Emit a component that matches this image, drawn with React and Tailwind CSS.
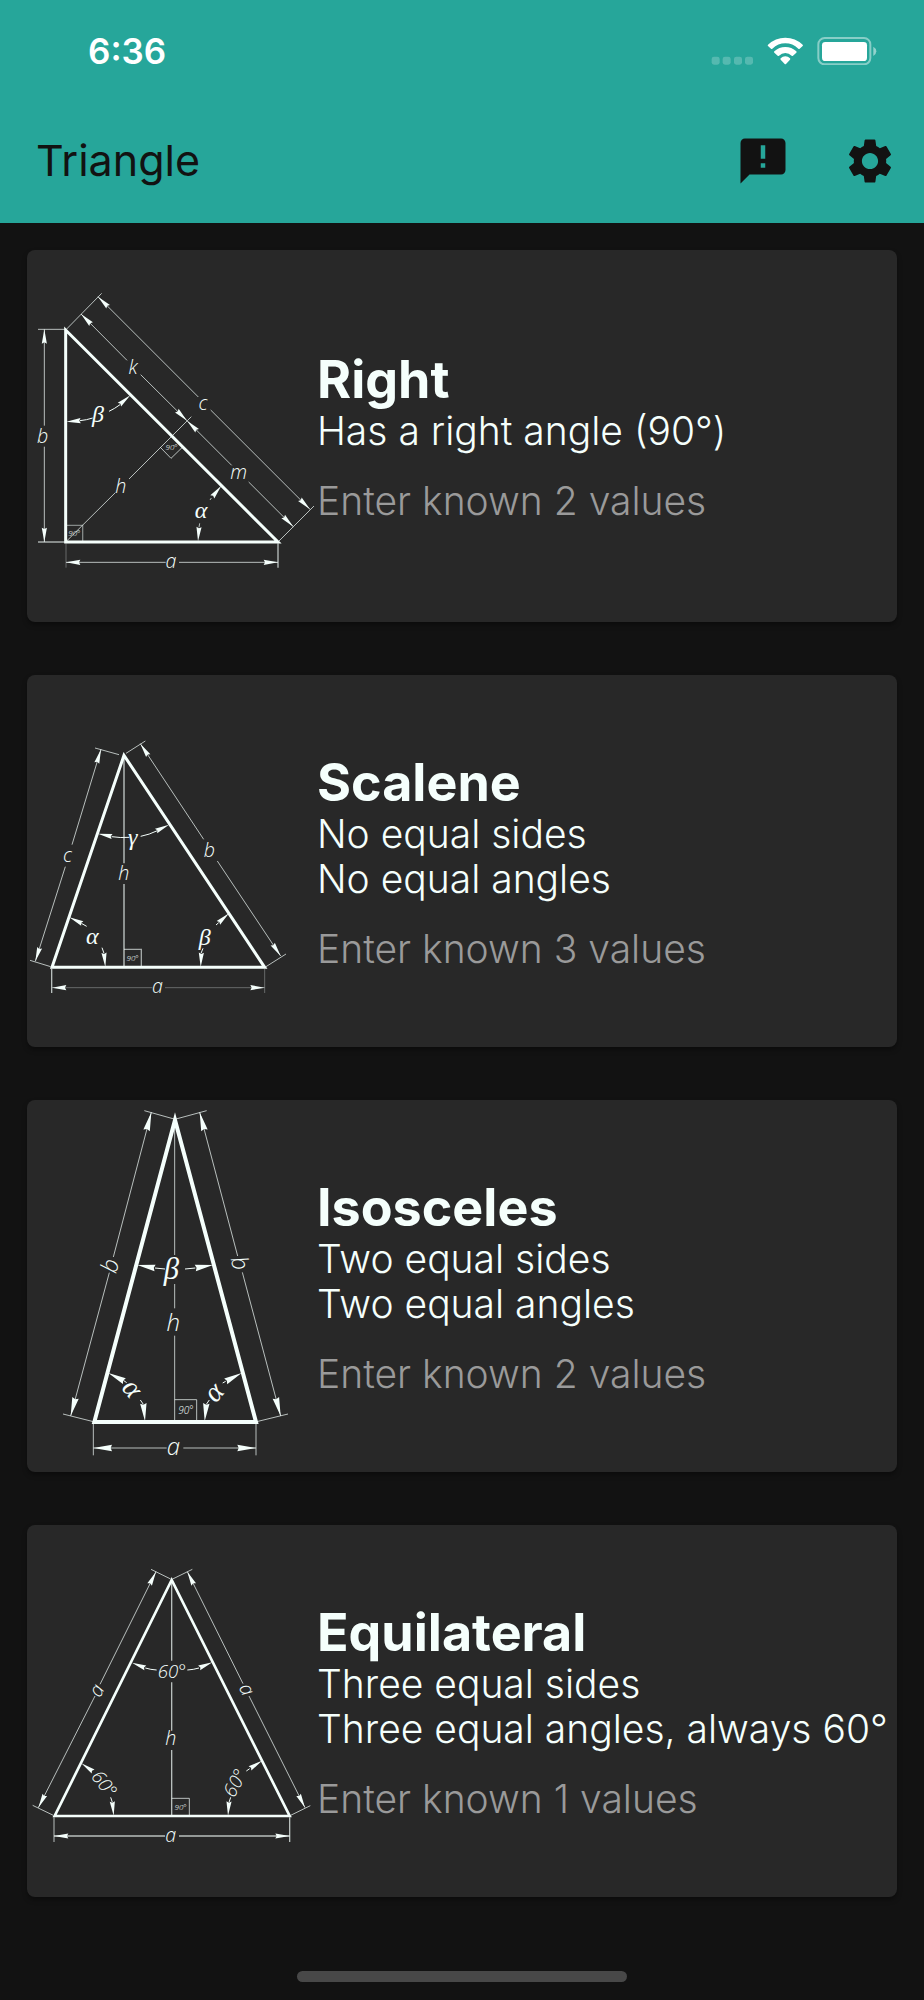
import React from "react";
import { MdAnnouncement, MdSettings } from "react-icons/md";

const INK = "#f5fffc";

function Line({ p, w = 3, o = 0.7 }) {
  return <polyline points={p} fill="none" stroke={INK} strokeWidth={w} strokeOpacity={o} />;
}

/* Arrowhead whose point is at (x, y), coming from the direction of (fx, fy). */
function Arrow({ x, y, fx, fy, len = 43 }) {
  const a = (Math.atan2(y - fy, x - fx) * 180) / Math.PI;
  const h = len / 5.6;
  return (
    <polygon
      points={`0,0 ${-len},${-h} ${-len + 4},0 ${-len},${h}`}
      fill={INK}
      transform={`translate(${x} ${y}) rotate(${a})`}
    />
  );
}

/* Dimension line in two halves, with a break for its label. */
function Dim({ a, b, c, d, len, o, w }) {
  return (
    <g>
      <Line p={`${a} ${b}`} o={o} w={w} />
      <Line p={`${c} ${d}`} o={o} w={w} />
      <Arrow x={a[0]} y={a[1]} fx={b[0]} fy={b[1]} len={len} />
      <Arrow x={d[0]} y={d[1]} fx={c[0]} fy={c[1]} len={len} />
    </g>
  );
}

function Label({ x, y, size = 59, r = 0, low = false, greek = false, children }) {
  const dy = size * (low ? (greek ? 0.22 : 0.27) : greek ? 0.24 : 0.37);
  return (
    <text
      transform={`translate(${x} ${y}) rotate(${r})`}
      y={dy}
      textAnchor="middle"
      fontSize={size}
      fill={INK}
      className={
        greek
          ? "font-['Liberation_Serif',serif] italic"
          : "font-['Open_Sans',sans-serif] font-[350] italic"
      }
    >
      {children}
    </text>
  );
}

function Figure({ viewBox, label, children }) {
  return (
    <svg viewBox={viewBox} role="img" aria-label={label} className="block w-full">
      {children}
    </svg>
  );
}

function RightFigure() {
  return (
    <Figure viewBox="21 -60 870 1116" label="Right triangle">
      <Line p="54,178 137,178" />
      <Line p="54,816 137,816" w={4} />
      <Line p="138,820 138,893" o={0.3} />
      <Line p="774,820 774,893" w={4} />
      <Line p="137,180 245,70" />
      <Line p="774,816 882,708" />
      <Dim a={[73, 178]} b={[73, 467]} c={[73, 530]} d={[73, 816]} />
      <Dim a={[138, 877]} b={[437, 877]} c={[477, 877]} d={[774, 877]} w={3} />
      <Dim a={[234, 80]} b={[535, 381]} c={[572, 420]} d={[870, 718]} />
      <Dim a={[183, 132]} b={[321, 271]} c={[362, 314]} d={[501, 452]} />
      <Dim a={[501, 452]} b={[635, 586]} c={[686, 636]} d={[820, 770]} />
      <Line p="137,816 286,668" />
      <Line p="327,627 514,440" />
      <Line p="421,532 453,565 487,532" />
      <Line p="137,766 188,766 188,816" w={4} o={0.45} />
      <path d="M180 452 Q200 450 218 444 M267 424 Q284 416 300 404" fill="none" stroke={INK} strokeWidth="3" />
      <Arrow x={139} y={455} fx={182} fy={452} />
      <Arrow x={331} y={376} fx={298} fy={404} />
      <Arrow x={604} y={647} fx={574} fy={684} />
      <Line p="574,684 570,690" />
      <Arrow x={534} y={814} fx={537} fy={772} />
      <Line p="537,772 539,760" />
      <polygon points="137,180 137,816 774,816" fill="none" stroke={INK} strokeWidth="9" />
      <Label x={68} y={496}>b</Label>
      <Label x={339} y={290}>k</Label>
      <Label x={549} y={404} low>c</Label>
      <Label x={656} y={612} low>m</Label>
      <Label x={302} y={648}>h</Label>
      <Label x={453} y={878} low>a</Label>
      <Label x={234} y={440} size={72} greek>β</Label>
      <Label x={543} y={729} size={72} low greek>α</Label>
      <Label x={163} y={790} size={24}>90°</Label>
      <Label x={455} y={531} size={24}>90°</Label>
    </Figure>
  );
}

function ScaleneFigure() {
  return (
    <Figure viewBox="21 -135 870 1116" label="Scalene triangle">
      <Line p="225,84 297,104" />
      <Line p="30,721 92,740" />
      <Line p="318,100 376,63" />
      <Line p="738,740 798,702" />
      <Line p="95,746 95,819" w={4} />
      <Line p="734,746 734,819" o={0.3} />
      <Line p="312,106 312,430" w={5} o={0.6} />
      <Line p="312,492 312,742" w={5} o={0.6} />
      <Line p="312,688 364,688 364,742" w={4} o={0.6} />
      <Dim a={[243, 88]} b={[156, 374]} c={[136, 440]} d={[46, 724]} />
      <Dim a={[361, 71]} b={[551, 358]} c={[592, 423]} d={[782, 708]} />
      <Dim a={[96, 803]} b={[397, 803]} c={[435, 803]} d={[734, 803]} o={0.3} />
      <path
        d="M275 350 Q300 354 328 352 M362 349 Q388 344 412 332 M184 610 L200 619 M252 700 L246 683 M543 700 L549 685 M596 608 L588 615"
        fill="none"
        stroke={INK}
        strokeWidth="3"
      />
      <Arrow x={234} y={341} fx={275} fy={349} />
      <Arrow x={447} y={314} fx={410} fy={332} />
      <Arrow x={148} y={592} fx={186} fy={610} />
      <Arrow x={256} y={741} fx={252} fy={698} />
      <Arrow x={542} y={741} fx={544} fy={700} />
      <Arrow x={627} y={580} fx={594} fy={610} />
      <polygon points="312,106 96,742 734,742" fill="none" stroke={INK} strokeWidth="9" />
      <Label x={142} y={410} low>c</Label>
      <Label x={568} y={388}>b</Label>
      <Label x={311} y={458}>h</Label>
      <Label x={412} y={804} low>a</Label>
      <Label x={338} y={359} size={72} low greek>γ</Label>
      <Label x={217} y={656} size={72} low greek>α</Label>
      <Label x={554} y={657} size={72} greek>β</Label>
      <Label x={338} y={715} size={24}>90°</Label>
    </Figure>
  );
}

function IsoscelesFigure() {
  return (
    <Figure viewBox="-69 15 870 1116" label="Isosceles triangle">
      <Line p="283,47 372,72" />
      <Line p="39,957 130,980" />
      <Line p="378,72 470,47" />
      <Line p="620,980 714,957" />
      <Line p="130,985 130,1081" />
      <Line p="618,985 618,1081" />
      <Line p="374,75 374,480" />
      <Line p="374,567 374,640" />
      <Line p="374,722 374,981" />
      <Line p="374,914 440,914 440,981" w={3} />
      <Dim a={[304, 52]} b={[190, 486]} c={[178, 533]} d={[62, 963]} len={56} />
      <Dim a={[449, 52]} b={[563, 483]} c={[577, 532]} d={[692, 963]} len={56} />
      <Dim a={[130, 1059]} b={[350, 1059]} c={[400, 1059]} d={[618, 1059]} len={56} />
      <path
        d="M315 519 L345 522 M436 519 L405 522 M220 856 L230 863 M280 928 L271 915 M527 859 L518 864 M469 928 L478 915"
        fill="none"
        stroke={INK}
        strokeWidth="3"
      />
      <Arrow x={262} y={510} fx={315} fy={519} len={54} />
      <Arrow x={489} y={510} fx={436} fy={519} len={54} />
      <Arrow x={175} y={834} fx={222} fy={858} len={54} />
      <Arrow x={285} y={979} fx={280} fy={925} len={54} />
      <Arrow x={575} y={834} fx={527} fy={859} len={54} />
      <Arrow x={464} y={979} fx={469} fy={925} len={54} />
      <polygon points="375,75 133,981 618,981" fill="none" stroke={INK} strokeWidth="12" />
      <Label x={178} y={512} size={70} r={-75}>b</Label>
      <Label x={572} y={504} size={70} r={75}>b</Label>
      <Label x={370} y={680} size={72}>h</Label>
      <Label x={370} y={1061} size={72} low>a</Label>
      <Label x={364} y={530} size={92} greek>β</Label>
      <Label x={241} y={885} size={86} r={50} low greek>α</Label>
      <Label x={497} y={897} size={86} r={-50} low greek>α</Label>
      <Label x={408} y={947} size={30}>90°</Label>
    </Figure>
  );
}

function EquilateralFigure() {
  return (
    <Figure viewBox="21 -75 870 1116" label="Equilateral triangle">
      <Line p="393,58 452,87" />
      <Line p="38,766 100,796" />
      <Line p="458,87 517,58" />
      <Line p="812,796 871,767" />
      <Line p="102,802 102,876" w={3} />
      <Line p="809,802 809,876" w={4} />
      <Line p="455,90 455,332" w={4} />
      <Line p="455,397 455,542" w={4} />
      <Line p="455,600 455,798" w={4} />
      <Line p="455,745 508,745 508,798" w={3} />
      <Dim a={[408, 65]} b={[240, 403]} c={[225, 438]} d={[55, 773]} />
      <Dim a={[502, 65]} b={[669, 401]} c={[687, 438]} d={[855, 773]} />
      <Dim a={[102, 858]} b={[435, 858]} c={[477, 858]} d={[809, 858]} w={4} />
      <path
        d="M376 354 Q392 359 410 360 M537 354 Q520 359 502 360 M277 757 L272 742 M627 757 L632 742 M689 656 L679 663"
        fill="none"
        stroke={INK}
        strokeWidth="3"
      />
      <Arrow x={336} y={338} fx={376} fy={354} />
      <Arrow x={577} y={337} fx={537} fy={354} />
      <Arrow x={184} y={640} fx={220} fy={665} />
      <Arrow x={281} y={797} fx={277} fy={755} />
      <Arrow x={726} y={632} fx={689} fy={656} />
      <Arrow x={624} y={797} fx={627} fy={755} />
      <polygon points="455,90 104,798 809,798" fill="none" stroke={INK} strokeWidth="8" />
      <Label x={233} y={423} r={-63} low>a</Label>
      <Label x={677} y={420} r={63} low>a</Label>
      <Label x={452} y={563}>h</Label>
      <Label x={452} y={860} low>a</Label>
      <Label x={456} y={362} size={56}>60°</Label>
      <Label x={254} y={701} size={56} r={52}>60°</Label>
      <Label x={644} y={698} size={56} r={-62}>60°</Label>
      <Label x={482} y={770} size={24}>90°</Label>
    </Figure>
  );
}

const TRIANGLES = [
  { id: "right", name: "Right", facts: ["Has a right angle (90°)"], known: 2, Art: RightFigure },
  { id: "scalene", name: "Scalene", facts: ["No equal sides", "No equal angles"], known: 3, Art: ScaleneFigure },
  { id: "isosceles", name: "Isosceles", facts: ["Two equal sides", "Two equal angles"], known: 2, Art: IsoscelesFigure },
  {
    id: "equilateral",
    name: "Equilateral",
    facts: ["Three equal sides", "Three equal angles, always 60°"],
    known: 1,
    Art: EquilateralFigure,
  },
];

function StatusIcons() {
  return (
    <svg viewBox="747 108 498 84" className="h-7 w-[166px]" role="img" aria-label="Wi-Fi on, battery full">
      <g fill="#fff" fillOpacity="0.22">
        <rect x="749" y="167" width="24" height="24" rx="7" />
        <rect x="782" y="167" width="24" height="24" rx="7" />
        <rect x="816" y="167" width="24" height="24" rx="7" />
        <rect x="849" y="167" width="24" height="24" rx="7" />
      </g>
      <g fill="#fff">
        <path d="M970 110 Q1000 110 1022 131 Q1024 133 1022 135 L1013 143 Q1011 145 1009 143 Q992 127 970 127 Q948 127 931 143 Q929 145 927 143 L918 135 Q916 133 918 131 Q940 110 970 110Z" />
        <path d="M970 138 Q989 138 1003 151 Q1005 153 1003 155 L993 164 Q991 166 989 164 Q981 156 970 156 Q959 156 951 164 Q949 166 947 164 L937 155 Q935 153 937 151 Q951 138 970 138Z" />
        <path d="M970 166 Q978 166 984 172 Q986 174 984 176 L972 189 Q970 191 968 189 L956 176 Q954 174 956 172 Q962 166 970 166Z" />
        <rect x="1080" y="123" width="135" height="57" rx="10" />
        <path d="M1234 137 Q1243 142 1243 151 Q1243 160 1234 165Z" fillOpacity="0.5" />
      </g>
      <rect x="1069" y="111" width="156" height="79" rx="19" fill="none" stroke="#fff" strokeOpacity="0.45" strokeWidth="6" />
    </svg>
  );
}

export default function App() {
  return (
    <div className="flex min-h-screen flex-col bg-[#121212] font-['Inter',sans-serif]">
      <header className="bg-[#26a69a] pb-1">
        <div className="flex h-[102px] items-center justify-between pr-[47px] pl-[88px] text-white">
          <span className="text-[35px] leading-none font-semibold">6:36</span>
          <StatusIcons />
        </div>
        <div className="flex h-[117px] items-center pl-[36px] text-[#121212]">
          <h1 className="grow text-[43px] leading-none font-normal">Triangle</h1>
          <button type="button" aria-label="Send feedback" className="flex h-full w-[107px] items-center justify-center">
            <MdAnnouncement className="size-[54px]" />
          </button>
          <button type="button" aria-label="Settings" className="flex h-full w-[108px] items-center justify-center">
            <MdSettings className="size-[54px]" />
          </button>
        </div>
      </header>

      <main className="flex flex-col gap-[53px] px-[27px] pt-[27px]">
        {TRIANGLES.map(({ id, name, facts, known, Art }) => (
          <a
            key={id}
            href={`#${id}`}
            className="grid grid-cols-3 items-center rounded-lg bg-[#282828] text-[#f5fffc] shadow-[0_3px_5px_rgba(0,0,0,0.35)]"
          >
            <Art />
            <div className="col-span-2 pt-[3px] text-[39px] leading-[45px] font-[350] whitespace-nowrap">
              <h2 className="text-[52px] leading-[56px] font-bold">{name}</h2>
              {facts.map((fact) => (
                <p key={fact}>{fact}</p>
              ))}
              <p className="pt-[25px] text-[#9a9a9a]">Enter known {known} values</p>
            </div>
          </a>
        ))}
      </main>

      <div className="mt-auto flex justify-center pb-[18px]">
        <div className="h-[11px] w-[330px] rounded-full bg-[#484848]" />
      </div>
    </div>
  );
}
